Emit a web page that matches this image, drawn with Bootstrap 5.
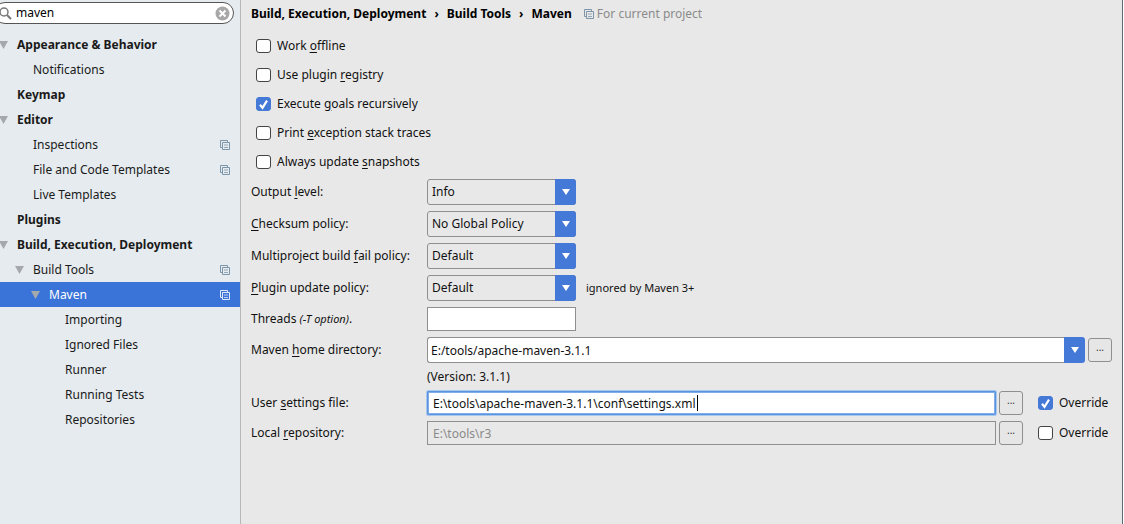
<!DOCTYPE html>
<html lang="en">
<head>
<meta charset="utf-8">
<meta name="viewport" content="width=device-width, initial-scale=1">
<title>Settings - Maven</title>
<link href="https://cdn.jsdelivr.net/npm/bootstrap@5.3.0/dist/css/bootstrap.min.css" rel="stylesheet">
<style>
  :root { --accent: #4479d8; --panel: #e8e8e8; --side: #e5ebef; --line: #8f8f8f; }
  body { font: 12px/18px "Noto Sans", "Liberation Sans", sans-serif; color: #111; background: #fff; }
  .settings { background: var(--panel); border-right: 1px solid #5d6974; margin-right: 1px; }
  .sidebar { width: 241px; background: var(--side); border-right: 1px solid #b4b8bb; }
  .search-box { height: 22px; margin: 2px 6px 0 -6px; border: 1px solid #555; background: #fff; padding: 0 3px 0 4px; }
  .search-box input { min-width: 0; font-size: 12px; line-height: 18px; color: #000; outline: 0; }
  .tree { margin-top: 8px; }
  .tree a { height: 25px; color: #1a1a1a; text-decoration: none; padding-right: 10px; }
  .tree .lvl-0 { font-weight: 700; }
  .tree .lvl-1 { padding-left: 16px; }
  .tree .lvl-2 { padding-left: 32px; }
  .tree .lvl-3 { padding-left: 48px; }
  .tree .twist { width: 17px; flex: none; }
  .tree .twist svg { display: block; margin-left: -1px; }
  .tree .active { background: #3b74d8; color: #fff; }
  .copy-mark { color: #7d95a8; flex: none; }
  .active .copy-mark { color: #dfe9fa; }
  .page { padding: 5px 10px 16px; }
  .page-title { font-size: 12px; line-height: 18px; font-weight: 700; color: #000; margin: 0; }
  .muted { color: #8b8b8b; gap: 3px; margin-left: 12px; }
  .option { height: 29px; margin: 0; padding: 0 0 0 5px; gap: 6px; min-height: 0; }
  .page .form-check-input {
    float: none; flex: none; margin: 0; width: 15px; height: 14px; border: 1px solid #444; border-radius: 3px; background-color: #fff; }
  .page .form-check-input:checked { background-color: var(--accent); border-color: var(--accent); background-size: 13px 13px;
    background-image: url("data:image/svg+xml,%3Csvg xmlns='http://www.w3.org/2000/svg' viewBox='0 0 13 13'%3E%3Cpath d='M3 7l2.500 3L10 3' fill='none' stroke='%23fff' stroke-width='2.200'/%3E%3C/svg%3E"); }
  u { text-underline-offset: 2px; }
  .field-label { width: 176px; flex: none; white-space: nowrap; }
  .tall { height: 32px; }
  .mid { height: 30px; }
  .version { height: 22px; }
  .page .form-select, .page .form-control { font-size: 12px; line-height: 18px; color: #111; border-color: var(--line); box-shadow: none; }
  .pick { width: 149px; }
  .page .form-select { height: 26px; padding: 0 24px 0 4px; background: none; border-radius: 3px; }
  .pick::after, .combo-btn { background: var(--accent) url("data:image/svg+xml,%3Csvg xmlns='http://www.w3.org/2000/svg' width='8' height='6'%3E%3Cpath d='M0 0h8L4 6z' fill='%23fff'/%3E%3C/svg%3E") no-repeat center; }
  .pick::after { content: ""; position: absolute; inset: 0 0 0 auto; width: 21px; border-radius: 0 3px 3px 0; pointer-events: none; }
  .combo-btn { width: 21px; height: 26px; border: 0; border-radius: 0 3px 3px 0; flex: none; }
  .page .form-control { height: 24px; padding: 0 5px; border-radius: 0; background: #fff; }
  .page .combo-text { height: 26px; padding: 0 3px; border-radius: 3px 0 0 3px; border-right: 0; }
  .page .threads { width: 149px; }
  .page .current { border: 1px solid #5b93df; box-shadow: inset 0 0 0 1px #7fadeb, 0 0 0 1px #a9c8f0; border-radius: 1px; }
  .page .form-control:disabled { background: var(--panel); color: #8a8a8a; }
  .caret-bar { position: absolute; left: 270px; top: 4px; width: 1px; height: 16px; background: #000; }
  .browse { width: 24px; height: 24px; margin-left: 3px; padding: 0 0 6px; border: 1px solid var(--line); border-radius: 3px; background: #e6e6e6; font-size: 10px; line-height: 16px; color: #333; flex: none; }
  .override { width: 89px; flex: none; padding-left: 15px; gap: 6px; }
  .hint { font-size: 11px; margin-left: 10px; }
  .side-note { font-size: 11px; }
</style>
</head>
<body>
<svg class="d-none" aria-hidden="true">
  <symbol id="copy" viewBox="0 0 10 10"><path d="M2.500 7.500h-2v-7h7v2M2.500 2.500h7v7h-7z" fill="none" stroke="currentColor"/><path d="M4 5h4M4 7.500h4" fill="none" stroke="currentColor" stroke-width=".8"/></symbol>
  <symbol id="down" viewBox="0 0 9 8"><path d="M0 0h9L4.500 8z" fill="#a5a9ac"/></symbol>
</svg>
<div class="settings d-flex min-vh-100">
  <aside class="sidebar flex-shrink-0 overflow-hidden">
    <div class="search-box rounded-pill d-flex align-items-center">
      <svg width="13" height="14" viewBox="0 0 13 14" fill="none" stroke="#777" aria-hidden="true"><circle cx="5" cy="6" r="4" stroke-width="1.500"/><path d="M8 9l4 4" stroke-width="2"/></svg>
      <input class="border-0 p-0 ms-1 flex-grow-1 bg-transparent" type="text" value="maven" aria-label="Search settings">
      <button class="btn p-0 border-0 d-flex" type="button" aria-label="Clear search"><svg width="15" height="15" viewBox="0 0 15 15"><circle cx="7.500" cy="7.500" r="7" fill="#a8a8a8"/><path d="M4.500 4.500l6 6M10.500 4.500l-6 6" stroke="#fff" stroke-width="2"/></svg></button>
    </div>
    <nav class="tree d-flex flex-column" aria-label="Settings">
      <a href="#" class="lvl-0 d-flex align-items-center"><span class="twist"><svg width="9" height="8"><use href="#down"/></svg></span>Appearance &amp; Behavior</a>
      <a href="#" class="lvl-1 d-flex align-items-center"><span class="twist"></span>Notifications</a>
      <a href="#" class="lvl-0 d-flex align-items-center"><span class="twist"></span>Keymap</a>
      <a href="#" class="lvl-0 d-flex align-items-center"><span class="twist"><svg width="9" height="8"><use href="#down"/></svg></span>Editor</a>
      <a href="#" class="lvl-1 d-flex align-items-center"><span class="twist"></span>Inspections<svg class="copy-mark ms-auto" width="10" height="10"><use href="#copy"/></svg></a>
      <a href="#" class="lvl-1 d-flex align-items-center"><span class="twist"></span>File and Code Templates<svg class="copy-mark ms-auto" width="10" height="10"><use href="#copy"/></svg></a>
      <a href="#" class="lvl-1 d-flex align-items-center"><span class="twist"></span>Live Templates</a>
      <a href="#" class="lvl-0 d-flex align-items-center"><span class="twist"></span>Plugins</a>
      <a href="#" class="lvl-0 d-flex align-items-center"><span class="twist"><svg width="9" height="8"><use href="#down"/></svg></span>Build, Execution, Deployment</a>
      <a href="#" class="lvl-1 d-flex align-items-center"><span class="twist"><svg width="9" height="8"><use href="#down"/></svg></span>Build Tools<svg class="copy-mark ms-auto" width="10" height="10"><use href="#copy"/></svg></a>
      <a href="#" class="lvl-2 active d-flex align-items-center" aria-current="page"><span class="twist"><svg width="9" height="8"><use href="#down"/></svg></span>Maven<svg class="copy-mark ms-auto" width="10" height="10"><use href="#copy"/></svg></a>
      <a href="#" class="lvl-3 d-flex align-items-center"><span class="twist"></span>Importing</a>
      <a href="#" class="lvl-3 d-flex align-items-center"><span class="twist"></span>Ignored Files</a>
      <a href="#" class="lvl-3 d-flex align-items-center"><span class="twist"></span>Runner</a>
      <a href="#" class="lvl-3 d-flex align-items-center"><span class="twist"></span>Running Tests</a>
      <a href="#" class="lvl-3 d-flex align-items-center"><span class="twist"></span>Repositories</a>
    </nav>
  </aside>

  <main class="page flex-grow-1">
    <div class="d-flex align-items-center mb-2">
      <h1 class="page-title d-flex gap-2"><span>Build, Execution, Deployment</span><span>›</span><span>Build Tools</span><span>›</span><span>Maven</span></h1>
      <span class="muted d-flex align-items-center"><svg class="copy-mark" width="10" height="10"><use href="#copy"/></svg>For current project</span>
    </div>

    <div class="option form-check d-flex align-items-center"><input class="form-check-input" type="checkbox" id="offline"><label for="offline">Work <u>o</u>ffline</label></div>
    <div class="option form-check d-flex align-items-center"><input class="form-check-input" type="checkbox" id="registry"><label for="registry">Use plugin <u>r</u>egistry</label></div>
    <div class="option form-check d-flex align-items-center"><input class="form-check-input" type="checkbox" id="recursive" checked><label for="recursive">Execute <u>g</u>oals recursively</label></div>
    <div class="option form-check d-flex align-items-center"><input class="form-check-input" type="checkbox" id="traces"><label for="traces">Print <u>e</u>xception stack traces</label></div>
    <div class="option form-check d-flex align-items-center"><input class="form-check-input" type="checkbox" id="snapshots"><label for="snapshots">Always update <u>s</u>napshots</label></div>

    <div class="tall d-flex align-items-center">
      <label class="field-label" for="output">Output <u>l</u>evel:</label>
      <div class="pick position-relative"><select class="form-select" id="output"><option>Info</option></select></div>
    </div>
    <div class="tall d-flex align-items-center">
      <label class="field-label" for="checksum"><u>C</u>hecksum policy:</label>
      <div class="pick position-relative"><select class="form-select" id="checksum"><option>No Global Policy</option></select></div>
    </div>
    <div class="tall d-flex align-items-center">
      <label class="field-label" for="fail">Multiproject build <u>f</u>ail policy:</label>
      <div class="pick position-relative"><select class="form-select" id="fail"><option>Default</option></select></div>
    </div>
    <div class="tall d-flex align-items-center">
      <label class="field-label" for="update"><u>P</u>lugin update policy:</label>
      <div class="pick position-relative"><select class="form-select" id="update"><option>Default</option></select></div>
      <span class="hint">ignored by Maven 3+</span>
    </div>
    <div class="mid d-flex align-items-center">
      <label class="field-label" for="threads">Threads <em class="side-note">(-T option)</em>.</label>
      <input class="form-control threads" id="threads" type="text">
    </div>
    <div class="tall d-flex align-items-center">
      <label class="field-label" for="home">Maven <u>h</u>ome directory:</label>
      <div class="d-flex flex-grow-1">
        <input class="form-control combo-text" id="home" type="text" value="E:/tools/apache-maven-3.1.1">
        <button class="combo-btn" type="button" aria-label="Show directories"></button>
      </div>
      <button class="browse" type="button" aria-label="Browse">...</button>
    </div>
    <div class="version d-flex align-items-center"><span class="field-label"></span><span>(Version: 3.1.1)</span></div>
    <div class="mid d-flex align-items-center">
      <label class="field-label" for="userfile">User <u>s</u>ettings file:</label>
      <div class="position-relative flex-grow-1">
        <input class="form-control current" id="userfile" type="text" value="E:\tools\apache-maven-3.1.1\conf\settings.xml">
        <span class="caret-bar"></span>
      </div>
      <button class="browse" type="button" aria-label="Browse">...</button>
      <div class="override d-flex align-items-center"><input class="form-check-input" type="checkbox" id="over1" checked><label for="over1">Override</label></div>
    </div>
    <div class="mid d-flex align-items-center">
      <label class="field-label" for="repo">Local <u>r</u>epository:</label>
      <input class="form-control flex-grow-1 w-auto" id="repo" type="text" value="E:\tools\r3" disabled>
      <button class="browse" type="button" aria-label="Browse">...</button>
      <div class="override d-flex align-items-center"><input class="form-check-input" type="checkbox" id="over2"><label for="over2">Override</label></div>
    </div>
  </main>
</div>
<script src="https://cdn.jsdelivr.net/npm/bootstrap@5.3.0/dist/js/bootstrap.bundle.min.js"></script>
</body>
</html>
